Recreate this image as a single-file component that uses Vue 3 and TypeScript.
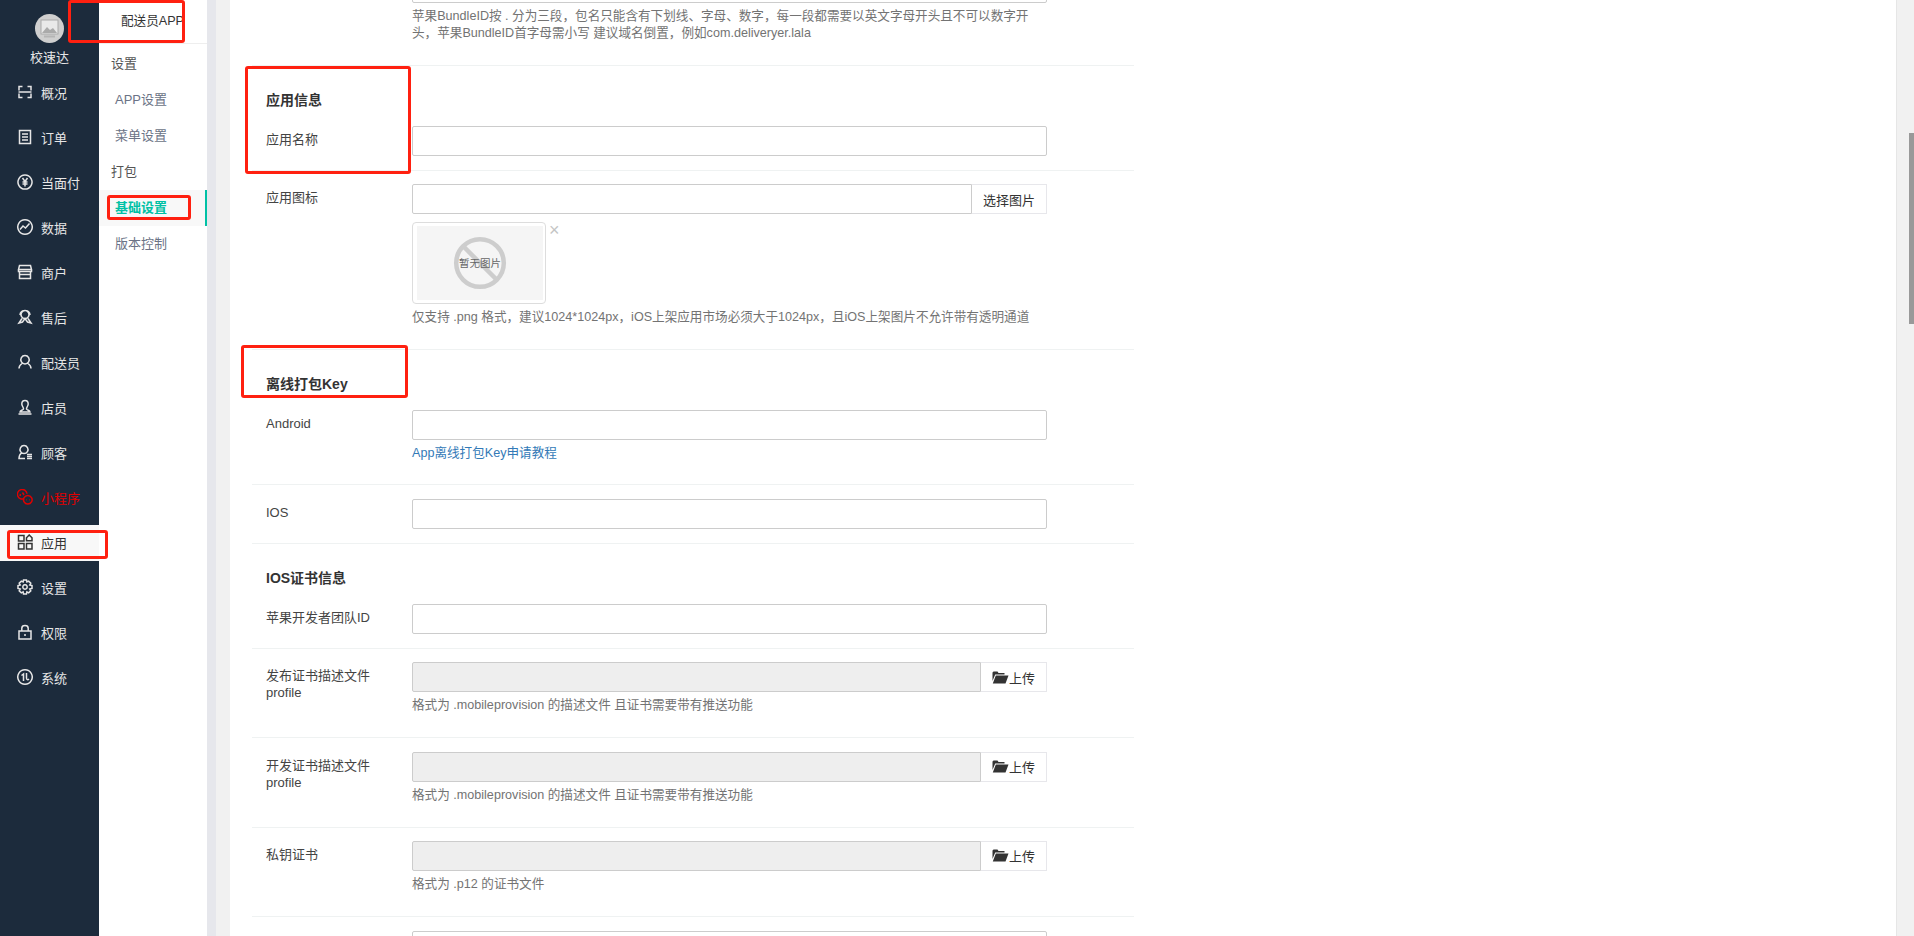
<script setup lang="ts">
const navItems = [
  { label: '概况', d: 'M2 6.500V2.500h3.500M10.500 2.500H14v4M1.500 8h13M2 9.500v4h3.500M10.500 13.500H14v-4' },
  { label: '订单', d: 'M2.500 1.500h11v13h-11zM5 5h6M5 8h6M5 11h6' },
  { label: '当面付', d: 'M8 1a7 7 0 1 0 .01 0zM5.500 4l2.500 3.500L10.500 4M8 7.500V12.500M5.500 8h5M5.500 10h5' },
  { label: '数据', d: 'M8 .8a7.200 7.200 0 1 0 .01 0zM3 10.500l3-3.500 2.500 2 4-4.500' },
  { label: '商户', d: 'M2.500 1.500h11l1 4h-13zM1.500 5.500v2h13v-2M2.500 7.500v7h11v-7M2.500 10.500h11' },
  { label: '售后', d: 'M8 1.500a4 4 0 1 0 .01 0zM3 6c0-6 10-6 10 0M5 9.500 2 14l3.500-1L8 9.500l2.500 3.500L14 14l-3-4.500' },
  { label: '配送员', d: 'M8 1.500a4.200 4.200 0 1 0 .01 0zM5 9.500C3.500 10.500 2 12 2 14.500M11 9.500c1.500 1 3 2.500 3 5' },
  { label: '店员', d: 'M8 1.500c-2 0-3.200 1.500-3.200 3.500 0 2 1.700 3 1.700 5 0 1-3.500 1-3.500 3h10c0-2-3.500-2-3.500-3 0-2 1.700-3 1.700-5 0-2-1.200-3.500-3.200-3.500zM1.500 15h13' },
  { label: '顾客', d: 'M7 1.500a4 4 0 1 0 .01 0zM4.500 9C3 10 2 12 2 14.500h6M10 10.500h5M10 12.500h5M10 14.500h5' },
  { label: '小程序', red: true, d: 'M7.500 9.500A4.800 4.800 0 1 1 10 4.800M5.500 3.500 7 6M3.500 5l-.5 2M10.800 6.500a4.300 4.300 0 1 0 .01 0zM9 10.800h.5M12.200 10.800h.5' },
  { label: '应用', active: true, d: 'M1.500 1.500h5.500v5.500H1.500zM1.500 9.500h5.500V15H1.500zM9.500 9.500H15V15H9.500zM12.200 1l2.800 2.800v3H9.500v-3z' },
  { label: '设置', d: 'M6.500 1h3l.4 2 1.800-.9 2.100 2.100-1 1.800 2.200.5v3l-2.200.5 1 1.800-2.100 2.100-1.800-1-.4 2.100h-3l-.4-2.100-1.800 1-2.100-2.100 1-1.800-2.200-.5v-3l2.200-.5-1-1.800 2.100-2.100 1.800.9zM8 5.800a2.200 2.200 0 1 0 .01 0z' },
  { label: '权限', d: 'M2 7h12v8H2zM4.800 7V4.200c0-3.600 6.400-3.600 6.400 0V7M8 10v2' },
  { label: '系统', d: 'M8 .8a7.200 7.200 0 1 0 .01 0zM4.500 6.500 6.500 5v7M9.500 4v5c0 2 1.500 2 2.500 1' }
]

const subGroups = [
  { title: '设置', items: [{ label: 'APP设置' }, { label: '菜单设置' }] },
  { title: '打包', items: [{ label: '基础设置', active: true }, { label: '版本控制' }] }
]

const uploads = [
  { label: '发布证书描述文件 profile', help: '格式为 .mobileprovision 的描述文件 且证书需要带有推送功能' },
  { label: '开发证书描述文件 profile', help: '格式为 .mobileprovision 的描述文件 且证书需要带有推送功能' },
  { label: '私钥证书', help: '格式为 .p12 的证书文件' }
]
</script>

<template>
  <div class="page">
    <aside class="sidebar">
      <div class="avatar">
        <svg viewBox="0 0 29 29" width="29" height="29">
          <circle cx="14.500" cy="14.500" r="14.500" fill="#cfcfcf" />
          <rect x="6" y="6" width="17" height="14" fill="#e9e9e9" stroke="#aaa" />
          <path d="M7 19l5-6 3 3 3-2 4 5z" fill="#aaa" />
          <rect x="9" y="21.500" width="11" height="2" fill="#b5b5b5" />
        </svg>
      </div>
      <div class="shop-name">校速达</div>
      <nav class="nav">
        <a v-for="item in navItems" :key="item.label" class="nav-item" :class="{ active: item.active, red: item.red }">
          <svg class="nav-icon" viewBox="0 0 16 16" width="16" height="16">
            <path :d="item.d" fill="none" stroke="currentColor" stroke-width="1.500" />
          </svg>
          <span>{{ item.label }}</span>
        </a>
      </nav>
    </aside>

    <aside class="submenu">
      <div class="submenu-title">配送员APP</div>
      <div class="submenu-list">
        <template v-for="group in subGroups" :key="group.title">
          <div class="submenu-group">{{ group.title }}</div>
          <a v-for="item in group.items" :key="item.label" class="submenu-item" :class="{ active: item.active }">
            {{ item.label }}
          </a>
        </template>
      </div>
    </aside>

    <main class="content">
      <form class="form">
        <div class="row">
          <div class="label"></div>
          <div class="field">
            <input class="input" type="text" />
            <p class="help">苹果BundleID按 . 分为三段，包名只能含有下划线、字母、数字，每一段都需要以英文字母开头且不可以数字开头，苹果BundleID首字母需小写 建议域名倒置，例如com.deliveryer.lala</p>
          </div>
        </div>

        <div class="row row-head">
          <h3 class="title">应用信息</h3>
          <div class="row-body">
            <div class="label">应用名称</div>
            <div class="field"><input class="input" type="text" /></div>
          </div>
        </div>

        <div class="row row-icon">
          <div class="label">应用图标</div>
          <div class="field">
            <div class="input-group">
              <input class="input" type="text" />
              <button type="button" class="addon pick">选择图片</button>
            </div>
            <div class="thumb-wrap">
              <div class="thumb">
                <svg viewBox="0 0 126 74" width="126" height="74">
                  <rect width="126" height="74" fill="#f5f5f5" />
                  <circle cx="63" cy="37" r="23.800" fill="none" stroke="#cdcdcd" stroke-width="4.500" />
                  <path d="M46 20l34 34" stroke="#cdcdcd" stroke-width="4.500" />
                  <text x="63" y="41" text-anchor="middle" class="thumb-text">暂无图片</text>
                </svg>
              </div>
              <span class="thumb-close">×</span>
            </div>
            <p class="help">仅支持 .png 格式，建议1024*1024px，iOS上架应用市场必须大于1024px，且iOS上架图片不允许带有透明通道</p>
          </div>
        </div>

        <div class="row row-head">
          <h3 class="title">离线打包Key</h3>
          <div class="row-body">
            <div class="label">Android</div>
            <div class="field">
              <input class="input" type="text" />
              <p class="help"><a class="link">App离线打包Key申请教程</a></p>
            </div>
          </div>
        </div>

        <div class="row">
          <div class="label">IOS</div>
          <div class="field"><input class="input" type="text" /></div>
        </div>

        <div class="row row-head row-head-last">
          <h3 class="title">IOS证书信息</h3>
          <div class="row-body">
            <div class="label">苹果开发者团队ID</div>
            <div class="field"><input class="input" type="text" /></div>
          </div>
        </div>

        <div v-for="item in uploads" :key="item.label" class="row row-upload">
          <div class="label">{{ item.label }}</div>
          <div class="field">
            <div class="input-group">
              <input class="input" type="text" disabled />
              <button type="button" class="addon upload">
                <svg viewBox="0 0 17 13" width="17" height="13">
                  <path d="M.5 1.500 1.500.5h4l1 1.500h6v1.500H3.200L.5 10zM3.800 4.500H16.500L13.500 12.500H.8z" fill="#333" />
                </svg>上传
              </button>
            </div>
            <p class="help">{{ item.help }}</p>
          </div>
        </div>

        <div class="row">
          <div class="label"></div>
          <div class="field"><input class="input" type="text" /></div>
        </div>
      </form>
    </main>

    <div class="scrollbar"><div class="thumb-bar"></div></div>

    <div class="mark mark-title"></div>
    <div class="mark mark-sub"></div>
    <div class="mark mark-nav"></div>
    <div class="mark mark-info"></div>
    <div class="mark mark-key"></div>
  </div>
</template>

<style>
html,
body {
  overflow: hidden;
  background: #fff;
}
</style>

<style scoped>
.page {
  position: relative;
  display: flex;
  height: 936px;
  overflow: hidden;
  font-family: "Liberation Sans", "Noto Sans CJK SC", sans-serif;
  font-size: 13px;
  color: #333;
}

.sidebar {
  flex: 0 0 99px;
  background: #1c2b3c;
  color: #e6e6e6;
}

.avatar {
  width: 29px;
  height: 29px;
  margin: 14px auto 0;
}

.avatar svg {
  display: block;
}

.shop-name {
  margin-top: 6px;
  text-align: center;
  line-height: 18px;
  color: #e6e6e6;
}

.nav {
  display: flex;
  flex-direction: column;
  gap: 9px;
  margin-top: 8px;
}

.nav-item {
  display: flex;
  align-items: center;
  box-sizing: border-box;
  height: 36px;
  padding: 0 0 2px 17px;
  gap: 8px;
}

.nav-icon {
  flex: none;
}

.nav-item.active {
  background: #f8f8f8;
  color: #333;
}

.nav-item.red {
  color: #e10000;
}

.submenu {
  flex: 0 0 108px;
  box-sizing: content-box;
  background: #fff;
  border-right: 9px solid #e6e7ec;
}

.submenu-title {
  height: 44px;
  padding-left: 22px;
  box-sizing: border-box;
  border-bottom: 1px solid #eee;
  font-size: 12.600px;
  line-height: 42px;
  white-space: nowrap;
  overflow: hidden;
}

.submenu-list {
  padding-top: 2px;
}

.submenu-group {
  height: 36px;
  padding-left: 12px;
  line-height: 36px;
  color: #555;
}

.submenu-item {
  display: block;
  height: 36px;
  padding-left: 16px;
  line-height: 36px;
  color: #6b7386;
}

.submenu-item.active {
  background: #f8f8f8;
  border-right: 2px solid #00c1a5;
  color: #00c1a5;
  font-weight: 700;
}

.content {
  flex: 1;
  min-width: 0;
  overflow: hidden;
  background: #fff;
  border-left: 14px solid #f1f1f1;
}

.form {
  width: 882px;
  margin: -41px 0 0 22px;
}

.row {
  display: flex;
  padding: 14px 0;
  border-bottom: 1px solid #eff2f2;
}

.row-head {
  display: block;
  padding-top: 25px;
}

.row-head-last {
  padding-top: 24.700px;
}

.row-body {
  display: flex;
}

.row-icon {
  padding-top: 13.500px;
}

.row-upload {
  padding-top: 13.400px;
}

.row-upload .help {
  margin-bottom: 9.030px;
}

.title {
  margin: 0 0 16.400px 14px;
  font-size: 14px;
  font-weight: 700;
  line-height: 18.570px;
  color: #333;
}

.label {
  flex: 0 0 160px;
  box-sizing: border-box;
  padding: 5px 24px 0 14px;
  line-height: 17px;
  color: #444;
}

.field {
  flex: 0 0 635px;
  min-width: 0;
}

.input {
  display: block;
  width: 100%;
  height: 30px;
  box-sizing: border-box;
  padding: 0 8px;
  border: 1px solid #ccc;
  border-radius: 2px;
  background: #fff;
  outline: none;
}

.input:disabled {
  background: #eee;
}

.input-group {
  display: flex;
}

.input-group .input {
  flex: 1;
  min-width: 0;
  border-radius: 2px 0 0 2px;
}

.addon {
  box-sizing: border-box;
  height: 30px;
  padding: 0;
  border: 1px solid #e7e7eb;
  border-left: none;
  background: #fff;
  font: inherit;
  color: #333;
}

.pick {
  flex: 0 0 75px;
}

.upload {
  flex: 0 0 66px;
  display: flex;
  align-items: center;
  justify-content: center;
}

.help {
  margin: 5px 0 8.570px;
  font-size: 12.600px;
  line-height: 17px;
  color: #737373;
}

.link {
  color: #337ab7;
}

.thumb-wrap {
  display: flex;
  align-items: flex-start;
  margin-top: 8px;
}

.thumb {
  box-sizing: border-box;
  width: 134px;
  height: 82px;
  padding: 3px 4px;
  border: 1px solid #ddd;
  border-radius: 4px;
}

.thumb svg {
  display: block;
}

.thumb-text {
  font-size: 10.500px;
  fill: #666;
}

.thumb-close {
  margin: -1px 0 0 3px;
  font-size: 18px;
  line-height: 18px;
  color: #c4c4c4;
}

.scrollbar {
  flex: 0 0 18px;
  display: flex;
  justify-content: flex-end;
  background: #f1f1f1;
  border-left: 1px solid #e6e6e6;
  box-sizing: border-box;
}

.thumb-bar {
  width: 5px;
  height: 191px;
  margin-top: 133px;
  background: #999;
}

.mark {
  position: absolute;
  box-sizing: border-box;
  border: 3px solid #ff2010;
  border-radius: 3px;
}

.mark-title {
  left: 68px;
  top: 0;
  width: 117px;
  height: 43px;
}

.mark-sub {
  left: 107px;
  top: 195px;
  width: 84px;
  height: 25px;
}

.mark-nav {
  left: 7px;
  top: 530px;
  width: 101px;
  height: 29px;
}

.mark-info {
  left: 245px;
  top: 66px;
  width: 166px;
  height: 108px;
}

.mark-key {
  left: 241px;
  top: 345px;
  width: 167px;
  height: 53px;
}
</style>
